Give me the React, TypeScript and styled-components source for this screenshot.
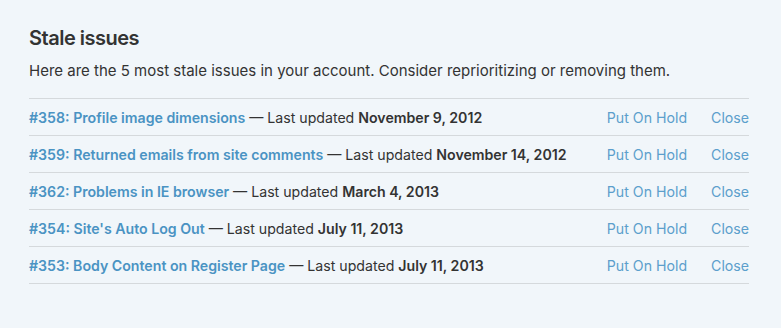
import React from "react";
import styled, { createGlobalStyle } from "styled-components";

const Global = createGlobalStyle`
  html, body { margin: 0; padding: 0; background: #f1f6fa; }
  body { font-family: Inter, "Open Sans", sans-serif; color: #333; }
`;

const Panel = styled.section`
  width: 720px;
  padding: 25px 32px 40px 29px;
`;

const Title = styled.h2`
  margin: 0;
  font-size: 20px;
  font-weight: 600;
  letter-spacing: -0.5px;
  line-height: 26px;
  color: #333;
`;

const Lead = styled.p`
  margin: 10px 0 17px;
  font-size: 15px;
  line-height: 20px;
  color: #333;
`;

const List = styled.ul`
  list-style: none;
  margin: 0;
  padding: 0;
  border-top: 1px solid #d5d9dc;
`;

const Row = styled.li`
  display: flex;
  align-items: center;
  height: 36px;
  border-bottom: 1px solid #d5d9dc;
  font-size: 14.15px;
`;

const Info = styled.div`
  flex: 1;
`;

const IssueLink = styled.a`
  color: #4a93c3;
  font-weight: 600;
  text-decoration: none;
`;

const Date = styled.strong`
  font-weight: 600;
`;

const Action = styled.a<{ $gap?: number }>`
  color: #5c9fcc;
  text-decoration: none;
  margin-left: ${(p) => p.$gap ?? 0}px;
`;

const issues = [
  { id: 358, title: "Profile image dimensions", date: "November 9, 2012" },
  { id: 359, title: "Returned emails from site comments", date: "November 14, 2012" },
  { id: 362, title: "Problems in IE browser", date: "March 4, 2013" },
  { id: 354, title: "Site's Auto Log Out", date: "July 11, 2013" },
  { id: 353, title: "Body Content on Register Page", date: "July 11, 2013" },
];

export default function App() {
  return (
    <>
      <Global />
      <Panel>
        <Title>Stale issues</Title>
        <Lead>
          Here are the 5 most stale issues in your account. Consider reprioritizing or removing them.
        </Lead>
        <List>
          {issues.map((i) => (
            <Row key={i.id}>
              <Info>
                <IssueLink href="#">#{i.id}: {i.title}</IssueLink> — Last updated <Date>{i.date}</Date>
              </Info>
              <Action href="#">Put On Hold</Action>
              <Action href="#" $gap={24}>Close</Action>
            </Row>
          ))}
        </List>
      </Panel>
    </>
  );
}
